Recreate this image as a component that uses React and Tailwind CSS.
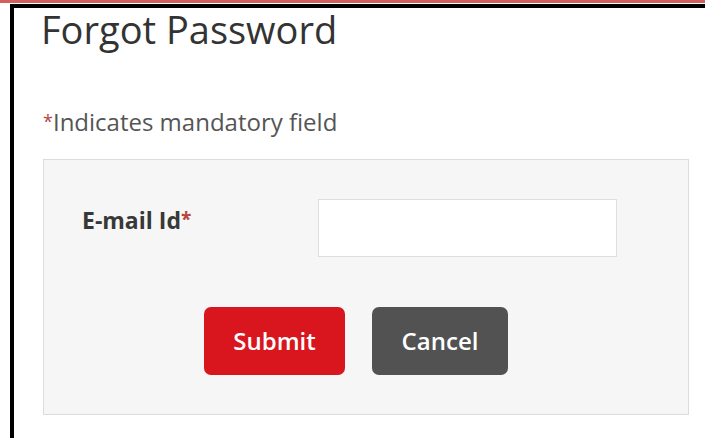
import React from "react";

const ForgotPassword = () => {
    return (
        <div className="w-[705px] h-[438px] bg-white overflow-hidden font-['Open_Sans',sans-serif]">
            {/* top accent strip */}
            <div className="h-[3px] bg-[#d4605c]" />
            <div className="mt-[1px] ml-[10px] h-[434px] border-t-4 border-l-4 border-black pl-[29px] pr-[16px]">
                <h1 className="pt-[1px] -ml-[2px] text-[38px] leading-[40px] text-[#333]">Forgot Password</h1>

                <p className="mt-[58px] h-[30px] text-[24px] leading-[30px] text-[#555]">
                    <span className="text-[18px] leading-none align-[3px] text-[#b5453f]">*</span>Indicates mandatory field
                </p>

                {/* form panel */}
                <div className="mt-[22px] h-[256px] bg-[#f6f6f6] border border-[#dcdcdc] pt-[39px]">
                    <div className="flex items-start">
                        <label className="w-[274px] h-[30px] pl-[38px] mt-[6px] text-[23px] leading-[30px] font-bold text-[#383838]">
                            E-mail Id<span className="text-[19px] leading-none align-[3px] text-[#b5453f]">*</span>
                        </label>
                        <input
                            type="email"
                            className="w-[299px] h-[58px] bg-white border border-[#dedede] outline-none px-3 text-[20px]"
                        />
                    </div>

                    <div className="mt-[50px] pl-[160px] flex gap-[27px]">
                        <button className="w-[141px] h-[68px] rounded-[7px] bg-[#d9151e] text-white text-[24px] font-semibold">
                            Submit
                        </button>
                        <button className="w-[136px] h-[68px] rounded-[7px] bg-[#525252] text-white text-[24px] font-semibold">
                            Cancel
                        </button>
                    </div>
                </div>
            </div>
        </div>
    );
};

export default function App() {
    return <ForgotPassword />;
}
